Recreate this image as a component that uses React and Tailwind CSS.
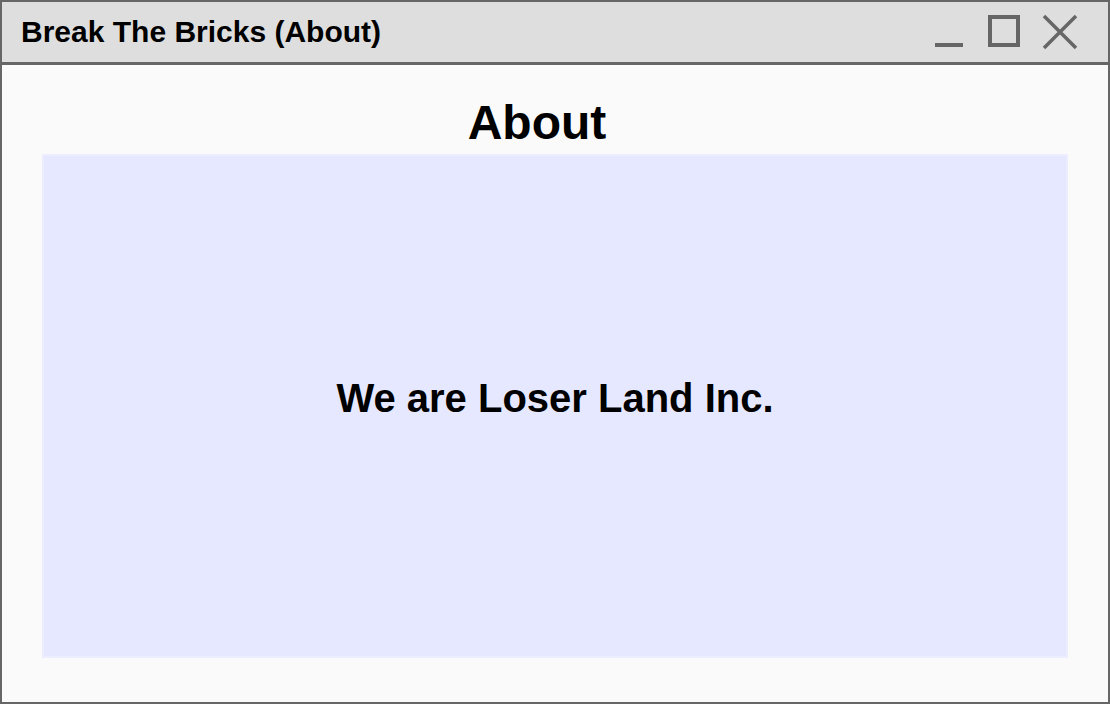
export default function App() {
  return (
    <div
      className="w-[1110px] h-[704px] flex flex-col border-2 border-[#666666] bg-[#fafafa]"
      style={{ fontFamily: '"Liberation Sans", Arial, sans-serif' }}
    >
      <div className="h-[63px] shrink-0 flex items-center justify-between pl-[19px] pr-[30px] bg-[#dedede] border-b-[3px] border-[#666666]">
        <span className="text-[30px] font-bold text-black leading-none">Break The Bricks (About)</span>
        <div className="flex items-center">
          <svg width="30" height="36" viewBox="0 0 30 36" className="mr-[24px]">
            <rect x="2" y="29" width="28" height="4" fill="#666666" />
          </svg>
          <svg width="34" height="34" viewBox="0 0 34 34" className="mr-[21px]">
            <rect x="3" y="2" width="28" height="28" fill="none" stroke="#666666" strokeWidth="4" />
          </svg>
          <svg width="36" height="36" viewBox="0 0 36 36">
            <path d="M2 2 L34 34 M34 2 L2 34" stroke="#666666" strokeWidth="3.5" />
          </svg>
        </div>
      </div>
      <div className="flex-1 flex flex-col px-[40px] pt-[30px] pb-[44px]">
        <h1 className="text-[48px] font-bold text-black text-center leading-[55px] mb-[4px] pr-[36px]">About</h1>
        <div className="flex-1 flex items-center justify-center bg-[#e6e8ff] border-2 border-[#eceeff] pb-[16px]">
          <p className="text-[40px] font-bold text-black">We are Loser Land Inc.</p>
        </div>
      </div>
    </div>
  )
}
